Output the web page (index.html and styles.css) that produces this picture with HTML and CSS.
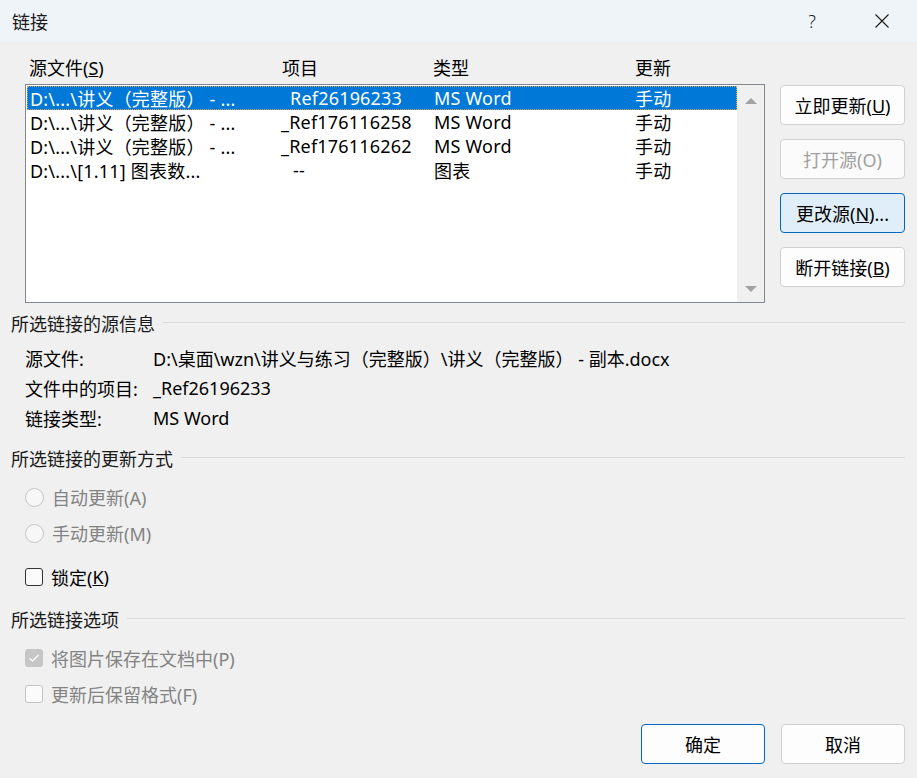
FILE: index.html
```html
<!DOCTYPE html>
<html lang="zh-CN">
<head>
    <meta charset="UTF-8">
    <meta name="viewport" content="width=device-width, initial-scale=1.0">
    <title>链接</title>
    <link rel="stylesheet" href="styles.css">
</head>
<body>
    <div class="dialog">
        <div class="titlebar">
            <span class="title">链接</span>
            <span class="caption-help">?</span>
            <span class="caption-close">
                <svg width="16" height="16" viewBox="0 0 16 16"><path d="M1.5 1.5L14.5 14.5M14.5 1.5L1.5 14.5" stroke="#1a1a1a" stroke-width="1.1" fill="none"/></svg>
            </span>
        </div>

        <div class="main">
            <div class="top">
                <div class="links">
                    <div class="cols">
                        <span class="col-src">源文件(<u>S</u>)</span>
                        <span class="col-item">项目</span>
                        <span class="col-type">类型</span>
                        <span>更新</span>
                    </div>
                    <div class="listbox">
                        <div class="rows">
                            <div class="row selected">
                                <span class="col-src">D:\...\讲义（完整版） - ...</span>
                                <span class="col-item pad-ref">Ref26196233</span>
                                <span class="col-type">MS Word</span>
                                <span>手动</span>
                            </div>
                            <div class="row">
                                <span class="col-src">D:\...\讲义（完整版） - ...</span>
                                <span class="col-item">_Ref176116258</span>
                                <span class="col-type">MS Word</span>
                                <span>手动</span>
                            </div>
                            <div class="row">
                                <span class="col-src">D:\...\讲义（完整版） - ...</span>
                                <span class="col-item">_Ref176116262</span>
                                <span class="col-type">MS Word</span>
                                <span>手动</span>
                            </div>
                            <div class="row">
                                <span class="col-src">D:\...\[1.11] 图表数...</span>
                                <span class="col-item pad-dash">--</span>
                                <span class="col-type">图表</span>
                                <span>手动</span>
                            </div>
                        </div>
                        <div class="scrollbar">
                            <span class="arrow up"></span>
                            <span class="arrow down"></span>
                        </div>
                    </div>
                </div>

                <div class="side">
                    <button class="btn">立即更新(<u>U</u>)</button>
                    <button class="btn" disabled>打开源(O)</button>
                    <button class="btn focused">更改源(<u>N</u>)...</button>
                    <button class="btn">断开链接(<u>B</u>)</button>
                </div>
            </div>

            <div class="group-title first"><span>所选链接的源信息</span></div>
            <div class="info">
                <div class="info-row"><span class="info-label">源文件:</span><span>D:\桌面\wzn\讲义与练习（完整版）\讲义（完整版） - 副本.docx</span></div>
                <div class="info-row"><span class="info-label">文件中的项目:</span><span>_Ref26196233</span></div>
                <div class="info-row"><span class="info-label">链接类型:</span><span>MS Word</span></div>
            </div>

            <div class="group-title second"><span>所选链接的更新方式</span></div>
            <div class="options">
                <label class="option disabled"><span class="radio"></span>自动更新(A)</label>
                <label class="option disabled"><span class="radio"></span>手动更新(M)</label>
            </div>
            <label class="option lock"><span class="check"></span>锁定(<u>K</u>)</label>

            <div class="group-title third"><span>所选链接选项</span></div>
            <div class="options">
                <label class="option disabled">
                    <span class="check checked">
                        <svg width="12" height="10" viewBox="0 0 12 10"><path d="M1.5 5.2L4.5 8L10.5 2" stroke="#fff" stroke-width="1.2" fill="none"/></svg>
                    </span>将图片保存在文档中(P)
                </label>
                <label class="option disabled"><span class="check"></span>更新后保留格式(F)</label>
            </div>

            <div class="footer">
                <button class="btn default">确定</button>
                <button class="btn">取消</button>
            </div>
        </div>
    </div>
</body>
</html>
```

FILE: styles.css
```css
body {
    margin: 0;
    background-color: #f0f0f0;
    font-family: "Noto Sans", "Noto Sans CJK SC", sans-serif;
    font-size: 18px;
    color: #000;
}

.dialog {
    width: 917px;
    height: 778px;
    overflow: hidden;
}

/* 标题栏 */
.titlebar {
    height: 42px;
    display: flex;
    align-items: center;
    padding-left: 12px;
    background-color: #eff4f9;
    color: #1a1a1a;
}

.title {
    flex: 1;
}

.caption-help {
    width: 20px;
    text-align: center;
    font-weight: 300;
    margin-right: 52px;
}

.caption-close {
    display: flex;
    margin-right: 27px;
}

.main {
    padding: 13px 12px 0 11px;
}

/* 链接列表 */
.top {
    display: flex;
    gap: 15px;
}

.links {
    flex: 1;
}

.cols {
    display: flex;
    height: 24px;
    align-items: center;
    padding-left: 18px;
}

.cols .col-src { width: 253px; }
.cols .col-item { width: 151px; }
.cols .col-type { width: 202px; }

.listbox {
    margin: 5px 0 0 14px;
    height: 219px;
    box-sizing: border-box;
    border: 1px solid #828790;
    background-color: #fff;
    display: flex;
}

.rows {
    flex: 1;
    padding: 1px 0 0 1px;
}

.row {
    display: flex;
    height: 24px;
    align-items: center;
    padding-left: 3px;
    box-sizing: border-box;
    white-space: nowrap;
    letter-spacing: 0.2px;
}

.row .col-src { width: 251px; }
.row .col-item { width: 153px; }
.row .col-type { width: 201px; }

.row .pad-ref { padding-left: 9px; width: 144px; }
.row .pad-dash { padding-left: 12px; width: 141px; }

.row.selected {
    background-color: #0078d7;
    color: #fff;
    outline: 1px dotted #d9a35c;
    outline-offset: -1px;
}

.scrollbar {
    width: 27px;
    background-color: #f0f0f0;
    display: flex;
    flex-direction: column;
    justify-content: space-between;
    align-items: center;
    padding: 13px 0 10px;
}

.arrow {
    width: 0;
    height: 0;
    border-left: 6px solid transparent;
    border-right: 6px solid transparent;
}

.arrow.up { border-bottom: 6px solid #a3a3a3; }
.arrow.down { border-top: 6px solid #a3a3a3; }

/* 按钮 */
.side {
    width: 125px;
    padding-top: 30px;
    display: flex;
    flex-direction: column;
    gap: 14px;
}

.btn {
    height: 40px;
    width: 125px;
    font-family: inherit;
    font-size: 18px;
    color: #000;
    background-color: #fdfdfd;
    border: 1px solid #d0d0d0;
    border-radius: 4px;
    padding: 0;
}

.btn:disabled {
    color: #a0a0a0;
    background-color: #fbfbfb;
}

.btn.focused {
    background-color: #e0eef9;
    border-color: #0067c0;
}

.btn.default {
    border-color: #0067c0;
}

/* 分组标题 */
.group-title {
    display: flex;
    align-items: center;
    height: 24px;
    color: #1a1a1a;
}

.group-title::after {
    content: "";
    flex: 1;
    height: 1px;
    background-color: #dadada;
    margin-left: 8px;
    margin-top: -2px;
}

.group-title.first { margin-top: 8px; }
.group-title.second { margin-top: 13px; }
.group-title.third { margin-top: 16px; }

.info {
    margin-top: 8px;
    padding-left: 14px;
}

.info-row {
    display: flex;
    height: 30px;
    align-items: center;
    white-space: nowrap;
}

.info-label {
    width: 128px;
}

/* 单选框和复选框 */
.options {
    margin-top: 9px;
}

.option {
    display: flex;
    align-items: center;
    height: 36px;
    padding-left: 14px;
}

.option.disabled {
    color: #838383;
}

.option.lock {
    height: 28px;
    margin-top: 12px;
}

.radio {
    width: 17px;
    height: 17px;
    border: 1px solid #c4c4c4;
    border-radius: 50%;
    background-color: #f7f7f7;
    margin-right: 8px;
}

.check {
    width: 18px;
    height: 18px;
    box-sizing: border-box;
    border: 1px solid #333;
    border-radius: 3px;
    background-color: #fbfbfb;
    margin-right: 8px;
    display: flex;
    align-items: center;
    justify-content: center;
}

.option.disabled .check {
    border-color: #c4c4c4;
}

.option.disabled .check.checked {
    background-color: #c6c6c6;
    border-color: #c6c6c6;
}

.footer {
    display: flex;
    justify-content: flex-end;
    gap: 16px;
    margin-top: 12px;
}

.footer .btn {
    width: 124px;
}
```
